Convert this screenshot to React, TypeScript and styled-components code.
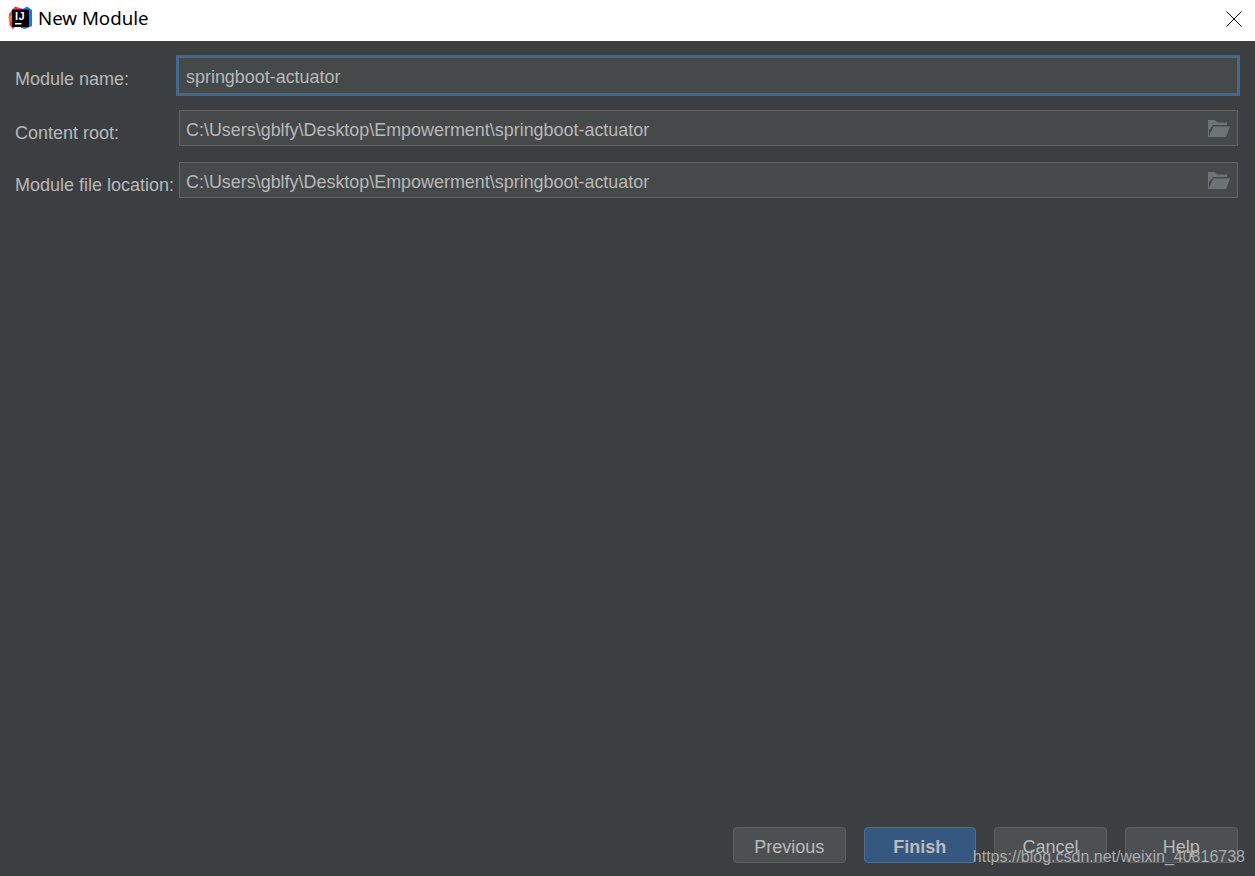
import React from "react";
import styled, { createGlobalStyle } from "styled-components";

const GlobalStyle = createGlobalStyle`
  html, body {
    margin: 0;
    padding: 0;
    height: 100%;
    background: #3c3f41;
  }
`;

const Dialog = styled.div`
  position: relative;
  width: 1255px;
  height: 876px;
  display: flex;
  flex-direction: column;
  overflow: hidden;
  background: #3c3f41;
  font-family: "Liberation Sans", Arial, sans-serif;
`;

const TitleBar = styled.header`
  height: 41px;
  flex: none;
  display: flex;
  align-items: center;
  padding: 0 13px 4px 8px;
  box-sizing: border-box;
  background: #fff;
`;

const LogoBox = styled.div`
  position: relative;
  width: 25px;
  height: 25px;
  margin-right: 5px;
`;

const LogoMark = styled.span`
  position: absolute;
  left: 7px;
  top: 5px;
  font: bold 11px/11px "Liberation Sans", sans-serif;
  letter-spacing: 0.5px;
  color: #fff;
`;

const Title = styled.span`
  flex: 1;
  margin-bottom: 2px;
  font-family: "Noto Sans", sans-serif;
  font-size: 18.7px;
  color: #000;
`;

const Form = styled.main`
  flex: 1;
  display: flex;
  flex-direction: column;
  gap: 16px;
  padding: 14px 17px 0 15px;
`;

const Row = styled.div`
  display: flex;
  align-items: center;
`;

const Label = styled.label`
  width: 164px;
  flex: none;
  padding-top: 9px;
  font-size: 18px;
  line-height: 20px;
  white-space: nowrap;
  color: #b8b8b8;
`;

const Field = styled.div<{ $focused?: boolean }>`
  flex: 1;
  height: 36px;
  box-sizing: border-box;
  display: flex;
  align-items: center;
  justify-content: space-between;
  padding: 5px 6px 0 6px;
  background: #45494a;
  border: 1px solid #646464;
  font-size: 17.93px;
  color: #b8b8b8;

  ${({ $focused }) =>
    $focused &&
    `
    height: 41px;
    margin: 0 -2px -2px -3px;
    padding: 3px 7px 0 7px;
    border: 3px solid #41688f;
  `}
`;

const Footer = styled.footer`
  display: flex;
  justify-content: flex-end;
  gap: 18px;
  padding: 0 17.5px 13px 0;
`;

const Button = styled.button<{ $primary?: boolean }>`
  width: 112.67px;
  height: 36px;
  padding: 5px 0 0;
  box-sizing: border-box;
  border-radius: 4px;
  font-family: "Liberation Sans", Arial, sans-serif;
  font-size: 18px;
  font-weight: ${({ $primary }) => ($primary ? 700 : 400)};
  color: #bbbbbb;
  background: ${({ $primary }) => ($primary ? "#365880" : "#4c5052")};
  border: 1px solid ${({ $primary }) => ($primary ? "#4c708c" : "#5e6060")};
`;

const Watermark = styled.span`
  position: absolute;
  right: 10px;
  bottom: 10px;
  font-size: 16px;
  line-height: 18px;
  color: #b4b6b8;
  opacity: 0.9;
`;

const FolderSvg = styled.svg`
  flex: none;
  margin-bottom: 4px;
`;

const IdeaLogo = () => (
  <svg width="25" height="25" viewBox="0 0 25 25">
    <path d="M1 8 L7 0.5 L15 3 L12 14 L5 23.5 L1.5 19 Z" fill="#fe315d" />
    <path d="M0 11 L5 8 L8 16 L3 16 Z" fill="#f97a12" />
    <path d="M13 4 L19 0.5 L24 4 L24 20 L17 23 L13 22 Z" fill="#087cfa" />
    <path d="M4 3.5 H21 V21 H4 Z" fill="#000" />
    <path d="M7 17 H13.5 V18.5 H7 Z" fill="#fff" />
  </svg>
);

const FolderIcon = () => (
  <FolderSvg width="24" height="18" viewBox="0 0 24 18">
    <path d="M1 0 H8 L10 2.5 H20 V5 H6 L2 10 V17 H1 Z" fill="#6c7476" />
    <path d="M6.5 6.5 H23 L19 17 H1.5 Z" fill="#6c7476" />
  </FolderSvg>
);

const CloseIcon = () => (
  <svg width="16" height="16" viewBox="0 0 16 16">
    <path d="M0.5 0.5 L15.5 15.5 M15.5 0.5 L0.5 15.5" stroke="#000" strokeWidth="1" fill="none" />
  </svg>
);

const path = "C:\\Users\\gblfy\\Desktop\\Empowerment\\springboot-actuator";

export default function App() {
  return (
    <Dialog>
      <GlobalStyle />
      <TitleBar>
        <LogoBox>
          <IdeaLogo />
          <LogoMark>IJ</LogoMark>
        </LogoBox>
        <Title>New Module</Title>
        <CloseIcon />
      </TitleBar>
      <Form>
        <Row>
          <Label>Module name:</Label>
          <Field $focused>springboot-actuator</Field>
        </Row>
        <Row>
          <Label>Content root:</Label>
          <Field>
            {path}
            <FolderIcon />
          </Field>
        </Row>
        <Row>
          <Label>Module file location:</Label>
          <Field>
            {path}
            <FolderIcon />
          </Field>
        </Row>
      </Form>
      <Footer>
        <Button>Previous</Button>
        <Button $primary>Finish</Button>
        <Button>Cancel</Button>
        <Button>Help</Button>
      </Footer>
      <Watermark>https://blog.csdn.net/weixin_40816738</Watermark>
    </Dialog>
  );
}
